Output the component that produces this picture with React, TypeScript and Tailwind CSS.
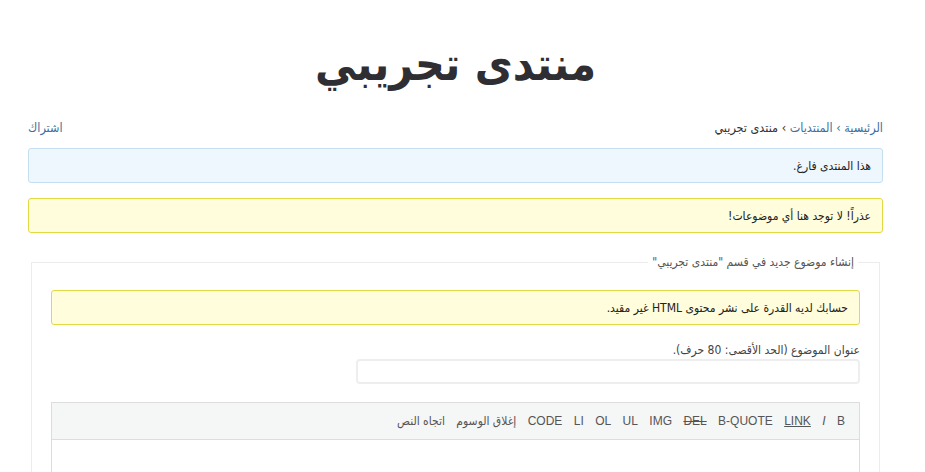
const FONT = { fontFamily: '"DejaVu Sans Condensed", "DejaVu Sans", sans-serif' };

const TOOLS = [
  { label: "B", cls: "" },
  { label: "I", cls: "italic" },
  { label: "LINK", cls: "underline" },
  { label: "B-QUOTE", cls: "" },
  { label: "DEL", cls: "line-through" },
  { label: "IMG", cls: "" },
  { label: "UL", cls: "" },
  { label: "OL", cls: "" },
  { label: "LI", cls: "" },
  { label: "CODE", cls: "" },
  { label: "إغلاق الوسوم", cls: "" },
  { label: "اتجاه النص", cls: "" },
];

export default function App() {
  return (
    <div dir="rtl" className="min-h-screen bg-white pl-[28px] pr-[42px] text-[#333]" style={FONT}>
      <div>
        <h1 className="pt-[31px] text-center text-[46px] font-bold leading-[66px] text-[#2f2f33]">
          منتدى تجريبي
        </h1>

        <div className="mt-[22px] flex items-center justify-between text-[12.5px] leading-[18px]">
          <div>
            <a className="text-[#3d6fa0]">الرئيسية</a>
            <span className="text-[#3d6fa0]"> › </span>
            <a className="text-[#3d6fa0]">المنتديات</a>
            <span> › </span>
            <span>منتدى تجريبي</span>
          </div>
          <a className="text-[#3d6fa0]">اشتراك</a>
        </div>

        <div className="mt-[11px] flex h-[35px] items-center rounded-[3px] border border-[#c6dff0] bg-[#eef6fe] px-[11px] text-[12px] text-[#222]">
          هذا المنتدى فارغ.
        </div>

        <div className="mt-[15px] flex h-[35px] items-center rounded-[3px] border border-[#e2da45] bg-[#fffddb] px-[11px] text-[12px] text-[#222]">
          عذراً! لا توجد هنا أي موضوعات!
        </div>

        <fieldset className="mx-[3px] mt-[20px] border border-[#ececec] px-[19px] pb-[40px]">
          <legend className="mr-[2px] px-[4px] text-[12px] text-[#555]">
            إنشاء موضوع جديد في قسم "منتدى تجريبي"
          </legend>

          <div className="mt-[19px] flex h-[35px] items-center rounded-[3px] border border-[#e2da45] bg-[#fffddb] px-[11px] text-[12px] text-[#222]">
            حسابك لديه القدرة على نشر محتوى HTML غير مقيد.
          </div>

          <div className="mt-[16px] text-[12px] leading-[18px] text-[#444]">
            عنوان الموضوع (الحد الأقصى: 80 حرف).
          </div>
          <input
            type="text"
            className="mt-0 block h-[25px] w-[504px] rounded-[4px] border-2 border-[#eee] outline-none"
          />

          <div className="mt-[18px] border border-[#ddd]">
            <div className="flex h-[37px] items-center gap-[11.4px] border-b border-[#ddd] bg-[#f5f6f6] px-[14px] text-[12px] text-[#555]">
              {TOOLS.map((t) => (
                <span
                  key={t.label}
                  className={t.cls}
                  style={{ fontFamily: '"Liberation Sans", "DejaVu Sans Condensed", sans-serif' }}
                >
                  {t.label}
                </span>
              ))}
            </div>
            <div className="h-[60px] bg-white" />
          </div>
        </fieldset>
      </div>
    </div>
  );
}
